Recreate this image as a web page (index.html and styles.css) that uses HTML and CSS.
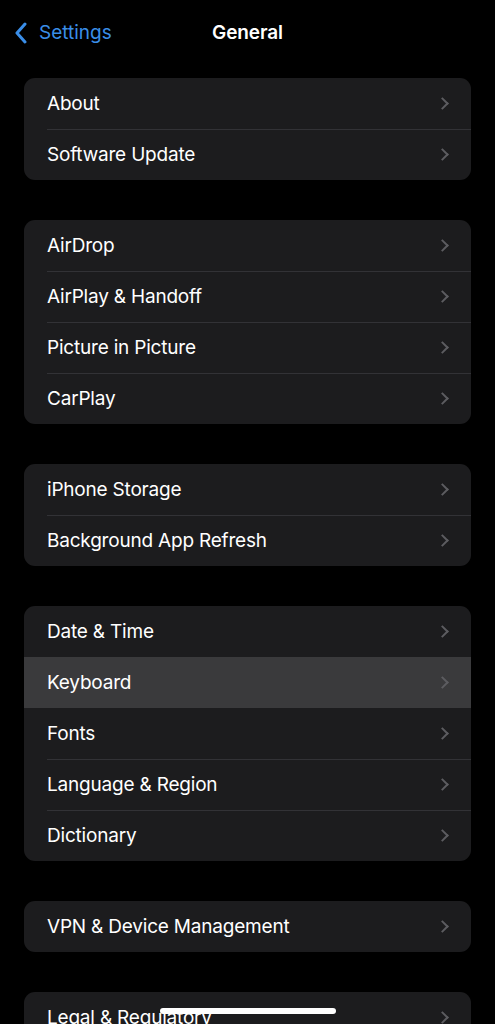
FILE: index.html
```html
<!DOCTYPE html>
<html lang="en">
<head>
<meta charset="utf-8">
<title>General</title>
<link rel="stylesheet" href="styles.css">
</head>
<body>
<div class="screen">
  <header class="nav">
    <a class="back" href="#">
      <svg class="back-icon" width="14" height="22" viewBox="0 0 14 22"><path d="M11 2 L3 11 L11 20" fill="none" stroke="currentColor" stroke-width="3" stroke-linecap="round" stroke-linejoin="round"/></svg>
      <span>Settings</span>
    </a>
    <h1 class="title">General</h1>
  </header>

  <main class="content">
    <section class="group">
      <div class="row"><span class="label">About</span><span class="chev"></span></div>
      <div class="row"><span class="label">Software Update</span><span class="chev"></span></div>
    </section>
    <section class="group">
      <div class="row"><span class="label">AirDrop</span><span class="chev"></span></div>
      <div class="row"><span class="label">AirPlay &amp; Handoff</span><span class="chev"></span></div>
      <div class="row"><span class="label">Picture in Picture</span><span class="chev"></span></div>
      <div class="row"><span class="label">CarPlay</span><span class="chev"></span></div>
    </section>
    <section class="group">
      <div class="row"><span class="label">iPhone Storage</span><span class="chev"></span></div>
      <div class="row"><span class="label">Background App Refresh</span><span class="chev"></span></div>
    </section>
    <section class="group">
      <div class="row"><span class="label">Date &amp; Time</span><span class="chev"></span></div>
      <div class="row active"><span class="label">Keyboard</span><span class="chev"></span></div>
      <div class="row"><span class="label">Fonts</span><span class="chev"></span></div>
      <div class="row"><span class="label">Language &amp; Region</span><span class="chev"></span></div>
      <div class="row"><span class="label">Dictionary</span><span class="chev"></span></div>
    </section>
    <section class="group">
      <div class="row"><span class="label">VPN &amp; Device Management</span><span class="chev"></span></div>
    </section>
    <section class="group">
      <div class="row"><span class="label">Legal &amp; Regulatory</span><span class="chev"></span></div>
    </section>
  </main>
  <div class="home-indicator"></div>
</div>
</body>
</html>
```
FILE: styles.css
```css
* { box-sizing: border-box; }
html, body {
  margin: 0;
  padding: 0;
  background: #000;
}
body {
  font-family: Inter, "Noto Sans", "Liberation Sans", sans-serif;
  color: #fff;
  -webkit-font-smoothing: antialiased;
}
.screen {
  position: relative;
  width: 495px;
  height: 1024px;
  overflow: hidden;
  background: #000;
}
.nav {
  position: relative;
  height: 66px;
  display: flex;
  justify-content: center;
}
.back {
  position: absolute;
  left: 14px;
  top: 22px;
  display: flex;
  align-items: center;
  gap: 11px;
  color: #3a8ee8;
  text-decoration: none;
  font-size: 19px;
}
.back-icon { display: block; }
.back span { line-height: 22px; }
.title {
  margin: 0;
  padding-top: 22px;
  font-size: 19px;
  font-weight: 600;
  line-height: 22px;
  letter-spacing: -0.1px;
}
.content {
  padding: 12px 24px 0;
  display: flex;
  flex-direction: column;
  gap: 40px;
}
.group {
  background: #1c1c1e;
  border-radius: 11px;
  overflow: hidden;
}
.row {
  position: relative;
  height: 51px;
  display: flex;
  align-items: center;
  justify-content: space-between;
  padding: 0 24px 0 23px;
  font-size: 19px;
  font-weight: 400;
  letter-spacing: -0.2px;
}
.row + .row::before {
  content: "";
  position: absolute;
  left: 23px;
  right: 0;
  top: 0;
  height: 1px;
  background: #323236;
}
.row.active { background: #3a3a3c; }
.row.active::before,
.row.active + .row::before { background: transparent; }
.chev {
  width: 9px;
  height: 9px;
  border-top: 2px solid #5c5c60;
  border-right: 2px solid #5c5c60;
  transform: rotate(45deg);
}
.home-indicator {
  position: absolute;
  left: 160px;
  top: 1008px;
  width: 176px;
  height: 6px;
  border-radius: 3px;
  background: #fff;
}
```
